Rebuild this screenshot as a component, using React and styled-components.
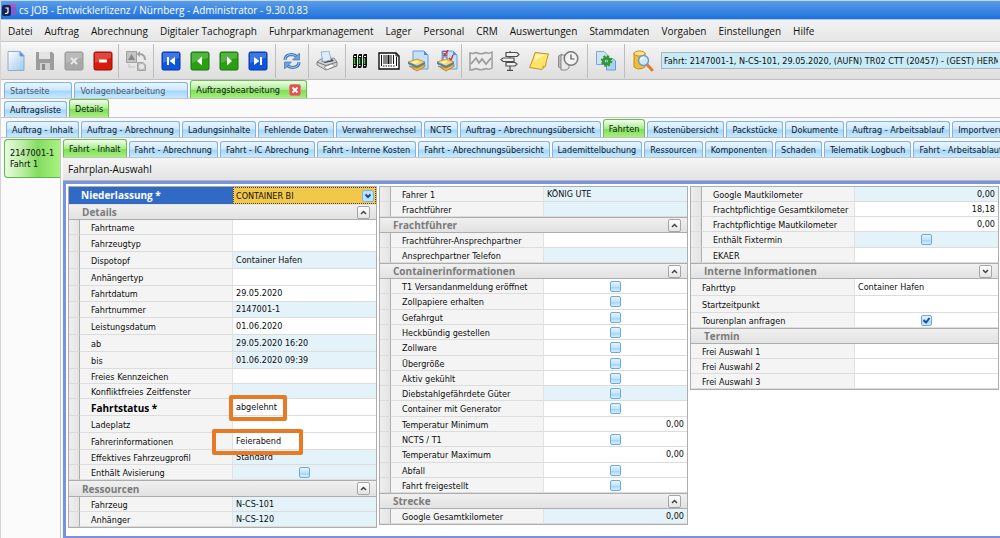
import styled, { createGlobalStyle, css } from "styled-components";

const GlobalStyle = createGlobalStyle`
  * {
    box-sizing: border-box;
  }

  body {
    margin: 0;
    background: #fafafa;
    color: #0c0c0c;
    font-family: "DejaVu Sans Condensed", "Noto Sans", sans-serif;
    font-size: 9px;
    line-height: 14px;
    overflow: hidden;
  }

  button,
  input,
  select {
    font: inherit;
    color: inherit;
    margin: 0;
  }
`;

const Window = styled.div`
  display: flex;
  flex-direction: column;
  min-height: 100vh;
  border-left: 1px solid #d4d4d4;
`;

const TitleBar = styled.header`
  display: flex;
  align-items: center;
  gap: 3px;
  height: 20px;
  padding-left: 1px;
  border-top: 1px solid #c3d9f5;
  border-bottom: 1px solid #a9c9f2;
  background: linear-gradient(#5a9dea, #1f70d8);
  color: #fff;
  font-family: "Open Sans", "Noto Sans", sans-serif;
  font-size: 10px;
`;

const MenuBar = styled.nav`
  display: flex;
  align-items: center;
  gap: 12px;
  height: 22px;
  padding-left: 7px;
  border-bottom: 1px solid #c6c6c6;
  background: linear-gradient(#f3f3f3, #e6e6e6);
`;

const MenuLink = styled.a`
  color: #111;
  font-family: "Open Sans", "Noto Sans", sans-serif;
  font-size: 10px;
  text-decoration: none;
  white-space: nowrap;
`;

const Toolbar = styled.div`
  display: flex;
  align-items: center;
  height: 38px;
  border-bottom: 1px solid #c0c0c0;
  background: linear-gradient(#fafafa, #f0f0f0 20%, #dedede);
`;

const ToolGroup = styled.div`
  display: flex;
  flex: none;
  align-items: center;
  gap: 1px;
  height: 34px;
  padding: 0 ${(p) => p.$space}px;
  border-right: ${(p) => (p.$last ? "none" : "1px solid #bdbdbd")};
`;

const ToolButton = styled.button`
  display: flex;
  align-items: center;
  justify-content: center;
  width: 28px;
  height: 28px;
  padding: 0;
  border: 0;
  background: none;
`;

const TripField = styled.input`
  flex: 1;
  min-width: 0;
  height: 17px;
  padding: 0 2px;
  border: 1px solid #a8b4bb;
  border-right: 0;
  background: #c9ebf7;
`;

const TabBar = styled.div`
  display: flex;
  align-items: flex-end;
  gap: 2px;
  height: ${(p) => p.$height}px;
  padding-left: ${(p) => p.$indent}px;
  border-bottom: 1px solid #c4c4c4;
  background: #fafafa;
  overflow: hidden;
`;

const activeTab = css`
  height: 18px;
  border-color: #67c04d;
  background: linear-gradient(#f4fff0, #a9ec8c 50%, #82de5a 55%, #a4f07c);
`;

const Tab = styled.button`
  display: flex;
  flex: none;
  align-items: center;
  gap: 9px;
  height: 16px;
  padding: 0 ${(p) => p.$end || 5}px 0 5px;
  border: 1px solid #7fb2e8;
  border-bottom: 0;
  border-radius: 3px 3px 0 0;
  background: linear-gradient(#e9f5ff, #cfe9ff 45%, #a6d6fd 55%, #c6eaff);
  color: ${(p) => (p.$muted ? "#4a5866" : "#0f1820")};
  white-space: nowrap;
  ${(p) => p.$active && activeTab}
`;

const Body = styled.div`
  display: flex;
  flex: 1;
  min-width: 0;
`;

const Sidebar = styled.aside`
  flex: none;
  width: 60px;
  padding: 1px 0 0 3px;
  border-right: 1px solid #c8c8c8;
  background: #fbfbfb;
`;

const SideTab = styled.button`
  width: 100%;
  height: 39px;
  padding: 0 0 0 5px;
  border: 1px solid #5cb947;
  border-right: 0;
  border-radius: 4px 0 0 4px;
  background: linear-gradient(90deg, #e8fbe0, #b5ec9c 35%, #84dc5f 60%, #a9f283);
  line-height: 11px;
  text-align: left;
`;

const Main = styled.main`
  display: flex;
  flex: 1;
  flex-direction: column;
  min-width: 0;
  padding-left: 2px;
`;

const SelectionBar = styled.div`
  height: 23px;
  padding: 4px 5px;
  border-bottom: 1px solid #b5b5b5;
  background: linear-gradient(#f6f6f6, #e3e3e3);
  font-family: "Open Sans", "Noto Sans", sans-serif;
  font-size: 10px;
`;

const Sheet = styled.form`
  display: grid;
  flex: 1;
  grid-template-columns: repeat(3, minmax(0, 1fr));
  align-items: start;
  gap: 2px;
  padding: 2px 1px 8px 2px;
  border: 3px solid #7793dc;
  border-right: 0;
  background: #fff;
`;

const Panel = styled.div`
  border: 1px solid #adadad;
  background: #fff;
`;

const SectionHead = styled.div`
  display: flex;
  align-items: center;
  justify-content: space-between;
  height: ${(p) => p.$height || 16}px;
  padding: 0 6px 0 13px;
  border-top: 1px solid ${(p) => (p.$first ? "transparent" : "#adadad")};
  border-bottom: 1px solid #adadad;
  background: linear-gradient(#f0f0f0, #e2e2e2);
  color: #7b7b7b;
  font-family: "Open Sans", "Noto Sans", sans-serif;
  font-size: 10px;
  font-weight: bold;
`;

const FoldButton = styled.button`
  display: flex;
  align-items: center;
  justify-content: center;
  width: 13px;
  height: 13px;
  padding: 0;
  border: 1px solid #a5a5a5;
  border-radius: 2px;
  background: linear-gradient(#fff, #e4e4e4);
`;

const FieldRow = styled.div`
  display: grid;
  grid-template-columns: ${(p) => (p.$flat ? "" : "11px")} ${(p) =>
      p.$flat ? "164fr" : "153fr"} 143fr;
  grid-template-rows: 100%;
  height: ${(p) => p.$height}px;
`;

const Gutter = styled.span`
  border-right: 1px solid #adadad;
  border-bottom: 1px solid #dcdcdc;
  background: linear-gradient(90deg, #eee, #e4e4e4);
`;

const requiredLabel = css`
  color: #000;
  font-family: "Open Sans", "Noto Sans", sans-serif;
  font-size: 10px;
  font-weight: bold;
`;

const FieldLabel = styled.label`
  display: flex;
  align-items: center;
  padding: 1px 0 0 11px;
  border-right: 1px solid #e2e2e2;
  border-bottom: 1px solid #dcdcdc;
  background: #f4f4f4;
  line-height: 12px;
  white-space: nowrap;
  ${(p) => p.$required && requiredLabel}
`;

const ValueCell = styled.div`
  position: relative;
  display: flex;
  align-items: center;
  justify-content: center;
  min-width: 0;
  border-bottom: 1px solid #dcdcdc;
  background: ${(p) => (p.$locked ? "#e4f3f9" : "#fff")};
  z-index: ${(p) => (p.$marked ? 1 : "auto")};
`;

const ValueInput = styled.input`
  width: 100%;
  height: 100%;
  padding: 0 3px 1px;
  border: 0;
  background: none;
  line-height: 12px;
  outline: none;
  text-align: ${(p) => (p.$numeric ? "right" : "left")};
`;

const CheckInput = styled.input`
  appearance: none;
  width: 11px;
  height: 11px;
  border: 1px solid #6fa8de;
  border-radius: 2px;
  background: linear-gradient(#e6f4ff, #c4e4fd 50%, #a4d6fc 60%, #d4f0ff);
`;

const CheckMark = styled.svg`
  position: absolute;
  pointer-events: none;
`;

const Highlight = styled.span`
  position: absolute;
  top: -4px;
  left: -${(p) => p.$before}px;
  width: ${(p) => p.$width}px;
  height: 26px;
  border: 4px solid #e87a25;
  border-radius: 2px;
  pointer-events: none;
`;

const BranchRow = styled.div`
  display: grid;
  grid-template-columns: 164fr 143fr;
  height: 17px;
  background: #316ac5;
`;

const BranchLabel = styled.label`
  padding-left: 12px;
  color: #fff;
  font-family: "Open Sans", "Noto Sans", sans-serif;
  font-size: 10px;
  font-weight: bold;
  line-height: 17px;
`;

const BranchCell = styled.div`
  position: relative;
  display: flex;
  align-items: center;
  border: 1px dotted #4d4220;
  background: #f2c84b;
`;

const BranchSelect = styled.select`
  appearance: none;
  width: 100%;
  height: 15px;
  padding: 0 2px;
  border: 0;
  background: none;
`;

const DropIcon = styled.svg`
  position: absolute;
  right: 1px;
  pointer-events: none;
`;

const menuItems = [
  "Datei",
  "Auftrag",
  "Abrechnung",
  "Digitaler Tachograph",
  "Fuhrparkmanagement",
  "Lager",
  "Personal",
  "CRM",
  "Auswertungen",
  "Stammdaten",
  "Vorgaben",
  "Einstellungen",
  "Hilfe",
];

const orderTabs = [
  "Auftrag - Inhalt",
  "Auftrag - Abrechnung",
  "Ladungsinhalte",
  "Fehlende Daten",
  "Verwahrerwechsel",
  "NCTS",
  "Auftrag - Abrechnungsübersicht",
  "Fahrten",
  "Kostenübersicht",
  "Packstücke",
  "Dokumente",
  "Auftrag - Arbeitsablauf",
  "Importverwaltung",
];

const tripTabs = [
  "Fahrt - Inhalt",
  "Fahrt - Abrechnung",
  "Fahrt - IC Abrechung",
  "Fahrt - Interne Kosten",
  "Fahrt - Abrechnungsübersicht",
  "Lademittelbuchung",
  "Ressourcen",
  "Komponenten",
  "Schaden",
  "Telematik Logbuch",
  "Fahrt - Arbeitsablauf",
];

const leftRows = [
  { section: "Details", first: true },
  { label: "Fahrtname" },
  { label: "Fahrzeugtyp", height: 17 },
  { label: "Dispotopf", value: "Container Hafen", locked: true, height: 17 },
  { label: "Anhängertyp", height: 17 },
  { label: "Fahrtdatum", value: "29.05.2020", height: 16 },
  { label: "Fahrtnummer", value: "2147001-1", locked: true, height: 16 },
  { label: "Leistungsdatum", value: "01.06.2020", height: 17 },
  { label: "ab", value: "29.05.2020 16:20", locked: true, height: 17 },
  { label: "bis", value: "01.06.2020 09:39", locked: true, height: 17 },
  { label: "Freies Kennzeichen" },
  { label: "Konfliktfreies Zeitfenster", locked: true },
  {
    label: "Fahrtstatus *",
    value: "abgelehnt",
    required: true,
    height: 17,
    mark: { before: 4, width: 58 },
  },
  { label: "Ladeplatz", height: 17 },
  {
    label: "Fahrerinformationen",
    value: "Feierabend",
    height: 17,
    mark: { before: 21, width: 91 },
  },
  { label: "Effektives Fahrzeugprofil", value: "Standard", locked: true },
  { label: "Enthält Avisierung", check: true, locked: true },
  { section: "Ressourcen", height: 17 },
  { label: "Fahrzeug", value: "N-CS-101", locked: true },
  { label: "Anhänger", value: "N-CS-120", locked: true },
];

const middleRows = [
  { label: "Fahrer 1", value: "KÖNIG UTE", locked: true },
  { label: "Frachtführer", locked: true },
  { section: "Frachtführer" },
  { label: "Frachtführer-Ansprechpartner" },
  { label: "Ansprechpartner Telefon", locked: true },
  { section: "Containerinformationen" },
  { label: "T1 Versandanmeldung eröffnet", check: true },
  { label: "Zollpapiere erhalten", check: true, height: 16 },
  { label: "Gefahrgut", check: true },
  { label: "Heckbündig gestellen", check: true },
  { label: "Zollware", check: true, height: 16 },
  { label: "Übergröße", check: true },
  { label: "Aktiv gekühlt", check: true },
  { label: "Diebstahlgefährdete Güter", check: true, locked: true },
  { label: "Container mit Generator", check: true, height: 16 },
  { label: "Temperatur Minimum", value: "0,00", numeric: true },
  { label: "NCTS / T1", check: true },
  { label: "Temperatur Maximum", value: "0,00", numeric: true, height: 16 },
  { label: "Abfall", check: true },
  { label: "Fahrt freigestellt", check: true },
  { section: "Strecke" },
  { label: "Google Gesamtkilometer", value: "0,00", numeric: true, locked: true },
];

const rightRows = [
  { label: "Google Mautkilometer", value: "0,00", numeric: true, locked: true },
  { label: "Frachtpflichtige Gesamtkilometer", value: "18,18", numeric: true },
  { label: "Frachtpflichtige Mautkilometer", value: "0,00", numeric: true },
  { label: "Enthält Fixtermin", check: true, locked: true, height: 16 },
  { label: "EKAER" },
  { section: "Interne Informationen", folded: true },
  { label: "Fahrttyp", value: "Container Hafen", flat: true, height: 17 },
  { label: "Startzeitpunkt", flat: true, height: 17 },
  { label: "Tourenplan anfragen", check: true, checked: true, flat: true },
  { section: "Termin", noFold: true },
  { label: "Frei Auswahl 1", flat: true },
  { label: "Frei Auswahl 2", flat: true },
  { label: "Frei Auswahl 3", flat: true },
];

const NewIcon = () => (
  <svg width="20" height="22" viewBox="0 0 20 22">
    <defs>
      <linearGradient id="page" x1="0" y1="0" x2="1" y2="1">
        <stop offset="0" stopColor="#fff" />
        <stop offset="1" stopColor="#9cc8ee" />
      </linearGradient>
    </defs>
    <path d="M2 1.500H14L18 5.500V20.500H2Z" fill="url(#page)" stroke="#8eabc9" />
    <path d="M14 1.500V6H18" fill="#4d94dd" stroke="#6d9fd2" />
  </svg>
);

const SaveIcon = () => (
  <svg width="20" height="20" viewBox="0 0 20 20">
    <path d="M1 1H17L19 3V19H1Z" fill="#9c9c9c" />
    <path d="M4 1H15V8H4Z" fill="#e3e3e3" />
    <path d="M5 12H15V19H5Z" fill="#cfcfcf" />
    <path d="M7 13H10V19H7Z" fill="#8a8a8a" />
  </svg>
);

const SquareIcon = ({ fill, edge, children }) => (
  <svg width="20" height="20" viewBox="0 0 20 20">
    <rect x="1" y="1" width="18" height="18" rx="1.500" fill={fill} stroke={edge} />
    <path d="M2 2H18V7Q10 8 2 12Z" fill="#fff" opacity=".2" />
    {children}
  </svg>
);

const ConvertIcon = () => (
  <svg width="22" height="22" viewBox="0 0 22 22">
    <rect x="1.500" y="1.500" width="10" height="11" fill="#c4c4c4" stroke="#a2a2a2" />
    <path d="M6.500 4L10 10H3Z" fill="#858585" />
    <path d="M12.500 12.500H18L20.500 15V20.500H12.500Z" fill="#bdbdbd" stroke="#a2a2a2" />
    <circle cx="16.500" cy="16.500" r="2.500" fill="#e9e9e9" />
    <path d="M20 10Q20 4 14 4" fill="none" stroke="#a2a2a2" strokeWidth="2" />
    <path d="M15 1V7L11.500 4Z" fill="#a2a2a2" />
    <path d="M4 14V17H10" fill="none" stroke="#ccc" strokeWidth="1.500" />
  </svg>
);

const RefreshIcon = () => (
  <svg width="18" height="18" viewBox="0 0 18 18" fill="none">
    <path d="M2 8Q2 3 8 2.500Q12 2.500 14 5" stroke="#3f78b8" strokeWidth="3" />
    <path d="M2 8Q2 3 8 2.500Q12 2.500 14 5" stroke="#a8cdf0" strokeWidth="1" />
    <path d="M16.500 1V8H9.500Z" fill="#6fa3d8" stroke="#3f78b8" strokeWidth=".7" />
    <path d="M16 10Q16 15 10 15.500Q6 15.500 4 13" stroke="#3f78b8" strokeWidth="3" />
    <path d="M16 10Q16 15 10 15.500Q6 15.500 4 13" stroke="#a8cdf0" strokeWidth="1" />
    <path d="M1.500 17V10H8.500Z" fill="#6fa3d8" stroke="#3f78b8" strokeWidth=".7" />
  </svg>
);

const PrintIcon = () => (
  <svg width="22" height="20" viewBox="0 0 22 20">
    <path d="M1 11L5 8L18 7L21 11V15L10 19L1 14Z" fill="#d5d5d5" stroke="#6c6c6c" strokeWidth=".8" />
    <path d="M1 11L10 14.500L21 11" fill="none" stroke="#777" />
    <path d="M5 10L16 8L18 10L9 12Z" fill="#444" />
    <path d="M5 1L13 0L15 9L7 11Z" fill="#dcecfb" stroke="#7ca6d2" strokeWidth=".8" />
    <path d="M8 16L16 13L19 15L11 18.500Z" fill="#fff" stroke="#777" strokeWidth=".6" />
  </svg>
);

const BindersIcon = () => (
  <svg width="16" height="16" viewBox="0 0 16 16">
    {[1, 6, 11].map((x) => (
      <g key={x}>
        <path d={`M${x} 3L${x + 1} 1H${x + 4}V13L${x + 3} 15H${x}Z`} fill="#111" />
        <path d={`M${x + 1} 3.500H${x + 3}`} stroke="#fff" />
        <path d={`M${x + 1.5} 5V11`} stroke="#38c938" strokeWidth="1.400" />
        <path d={`M${x + 1} 12.500H${x + 2.5}`} stroke="#fff" />
      </g>
    ))}
  </svg>
);

const BarcodeIcon = () => (
  <svg width="22" height="18" viewBox="0 0 22 18">
    <path d="M1 1H18L21 4V17H1Z" fill="#fff" stroke="#111" strokeWidth="1.400" />
    <path d="M18 1V4H21" fill="none" stroke="#111" />
    <path d="M3.500 3V14M6 3V12M8 3V12M13 3V12M15.500 3V12M18.500 5V14" stroke="#111" strokeWidth="1" />
    <path d="M10.500 3V12" stroke="#111" strokeWidth="2" />
    <path d="M5 14H17" stroke="#111" strokeDasharray="1.500 1" />
  </svg>
);

const ArchiveIcon = ({ checked }) => (
  <svg width="22" height="22" viewBox="0 0 22 22">
    <path d="M6 1H17L21 5V19H6Z" fill="#c5e0f8" stroke="#6b9ed2" />
    <path d="M17 1V5H21Z" fill="#4c8fdc" />
    {checked && (
      <g fill="#fff" stroke="#3b4a9a" strokeWidth=".8">
        <rect x="7" y="1.500" width="4" height="4" />
        <rect x="7" y="7" width="4" height="4" />
        <path d="M8 3L9 5L12 0M13 8L15 10L17 5" fill="none" stroke="#e02a1c" strokeWidth="1.400" />
      </g>
    )}
    <path d="M1 12L10 9L18 12L10 16Z" fill="#ffd566" stroke="#b37b18" strokeWidth=".7" />
    <path d="M1 12V14L10 18L18 14V12L10 16Z" fill="#3b82c8" />
    <path d="M2 16L10 18L18 14.500V16.500L10 21Z" fill="#f5b83a" stroke="#a87012" strokeWidth=".7" />
    <path d="M4 12L10 10.500L12 12L8 14Z" fill="#fff0b8" />
  </svg>
);

const MapIcon = () => (
  <svg width="24" height="20" viewBox="0 0 24 20" fill="none" stroke="#9d9d9d" strokeWidth="1.500">
    <path d="M1 2Q4 3 7 1.500Q12 4 17 1.500Q20 3 23 1V17Q20 19 17 17.500Q12 20 7 17.500Q4 19 1 19Z" fill="#ececec" />
    <path d="M2 13L7 7L10 12L13 8L17 13L22 7" strokeWidth="1.800" />
  </svg>
);

const SignIcon = () => (
  <svg width="20" height="20" viewBox="0 0 20 20" fill="#f0f0f0" stroke="#4d4d4d" strokeWidth="1.200">
    <path d="M10 0V19M7 19.300H13" />
    <path d="M6 1.500H17L19 3.500L17 5.500H6Z" />
    <path d="M14 7H3L1 8.500L3 10.500H14Z" />
    <path d="M6 11.500H15L17 13L15 15H6Z" />
  </svg>
);

const NoteIcon = () => (
  <svg width="22" height="20" viewBox="0 0 22 20">
    <path d="M7 1.500L20.500 3Q18 10 17.500 15L14 18.500L1.500 16.500Q5 9 7 1.500Z" fill="#ffe469" stroke="#b9952c" />
    <path d="M8 3L18 4Q10 6 6 12Z" fill="#fff5b8" />
    <path d="M14 18L14.500 14.500L17.500 15Z" fill="#d9ac2f" />
  </svg>
);

const HistoryIcon = () => (
  <svg width="22" height="20" viewBox="0 0 22 20">
    <path d="M1.500 5L5 3V18L1.500 16Z" fill="#bbb" stroke="#777" strokeWidth=".8" />
    <path d="M4 4H12V17L9 19H4Z" fill="#e9e9e9" stroke="#888" />
    <circle cx="14" cy="7.500" r="6.800" fill="#f3f3f3" stroke="#7d7d7d" strokeWidth="1.600" />
    <path d="M14 3.500V8H17.500" fill="none" stroke="#555" strokeWidth="1.200" />
  </svg>
);

const ProcessIcon = () => (
  <svg width="22" height="22" viewBox="0 0 22 22">
    <path d="M1.500 1.500H9L12 4.500V14.500H1.500Z" fill="#cfe4f8" stroke="#7ba7d4" />
    <path d="M11.500 8.500H18L20.500 11V20H11.500Z" fill="#a9cff2" stroke="#6b9bcb" />
    <circle cx="11.500" cy="11" r="3" fill="none" stroke="#2f9a2f" strokeWidth="3" />
    <circle cx="11.500" cy="11" r="4.800" fill="none" stroke="#2f9a2f" strokeWidth="2" strokeDasharray="2 1.770" />
  </svg>
);

const FindIcon = () => (
  <svg width="22" height="22" viewBox="0 0 22 22">
    <path d="M2 3V17Q7 21 13 17V3Z" fill="#f3bd32" stroke="#c48a12" />
    <ellipse cx="7.500" cy="3.500" rx="5.500" ry="2.500" fill="#ffe58a" stroke="#c48a12" />
    <path d="M15 14.500L20 20" stroke="#e07b28" strokeWidth="3" strokeLinecap="round" />
    <circle cx="11.500" cy="10.500" r="5" fill="#cfe7fa" stroke="#6d9cca" strokeWidth="1.500" />
    <path d="M8.500 10Q9 7.500 12 7.500" fill="none" stroke="#fff" strokeWidth="1.500" />
  </svg>
);

const AppLogo = () => (
  <svg width="14" height="14" viewBox="0 0 14 14">
    <rect x="4" y="1" width="10" height="10" rx="2" fill="#b55ab8" />
    <rect x="8" y="4" width="6" height="8" fill="#7f5fd0" />
    <rect y="2" width="9" height="11" rx="2" fill="#14255c" />
    <path d="M3.500 5H6V9Q6 10.500 3 10.500" fill="none" stroke="#fff" strokeWidth="1.200" />
  </svg>
);

const toolGroups = [
  {
    space: 1,
    tools: [
      { title: "Neu", icon: <NewIcon /> },
      { title: "Speichern", icon: <SaveIcon /> },
      {
        title: "Abbrechen",
        icon: (
          <SquareIcon fill="#a9a9a9" edge="#979797">
            <path d="M7 7L13 13M13 7L7 13" stroke="#e8e8e8" strokeWidth="2" />
          </SquareIcon>
        ),
      },
      {
        title: "Löschen",
        icon: (
          <SquareIcon fill="#d91a0c" edge="#8e1108">
            <path d="M6 10H14" stroke="#fff" strokeWidth="3" />
          </SquareIcon>
        ),
      },
    ],
  },
  { space: 3, tools: [{ title: "Umwandeln", icon: <ConvertIcon /> }] },
  {
    space: 3,
    tools: [
      {
        title: "Erster",
        icon: (
          <SquareIcon fill="#0d55dc" edge="#08379a">
            <path d="M6 6H8V14H6ZM14 6V14L8.500 10Z" fill="#fff" />
          </SquareIcon>
        ),
      },
      {
        title: "Voriger",
        icon: (
          <SquareIcon fill="#28a012" edge="#1b7010">
            <path d="M12 5.500V14.500L7 10Z" fill="#fff" />
          </SquareIcon>
        ),
      },
      {
        title: "Nächster",
        icon: (
          <SquareIcon fill="#28a012" edge="#1b7010">
            <path d="M8 5.500V14.500L13 10Z" fill="#fff" />
          </SquareIcon>
        ),
      },
      {
        title: "Letzter",
        icon: (
          <SquareIcon fill="#0d55dc" edge="#08379a">
            <path d="M12 6H14V14H12ZM6 6V14L11.500 10Z" fill="#fff" />
          </SquareIcon>
        ),
      },
    ],
  },
  { space: 2, tools: [{ title: "Aktualisieren", icon: <RefreshIcon /> }] },
  { space: 4, tools: [{ title: "Drucken", icon: <PrintIcon /> }] },
  {
    space: 0,
    tools: [
      { title: "Ordner", icon: <BindersIcon /> },
      { title: "Barcode", icon: <BarcodeIcon /> },
      { title: "Archiv", icon: <ArchiveIcon /> },
      { title: "Archivieren", icon: <ArchiveIcon checked /> },
    ],
  },
  {
    space: 5,
    tools: [
      { title: "Karte", icon: <MapIcon /> },
      { title: "Route", icon: <SignIcon /> },
      { title: "Notiz", icon: <NoteIcon /> },
      { title: "Historie", icon: <HistoryIcon /> },
    ],
  },
  { space: 4, tools: [{ title: "Vorgang", icon: <ProcessIcon /> }] },
  { space: 4, last: true, tools: [{ title: "Suchen", icon: <FindIcon /> }] },
];

const Fold = ({ folded, name }) => (
  <FoldButton type="button" aria-label={name}>
    <svg width="7" height="7" viewBox="0 0 7 7" fill="none" stroke="#444" strokeWidth="1.500">
      <path d={folded ? "M1 2L3.500 4.500L6 2" : "M1 5L3.500 2.500L6 5"} />
    </svg>
  </FoldButton>
);

const Field = ({ row, id }) => {
  const height = row.height || 15;

  return (
    <FieldRow $height={height} $flat={row.flat}>
      {!row.flat && <Gutter />}
      <FieldLabel htmlFor={id} $required={row.required}>
        {row.label}
      </FieldLabel>
      <ValueCell $locked={row.locked} $marked={row.mark}>
        {row.check ? (
          <CheckInput id={id} type="checkbox" defaultChecked={row.checked} />
        ) : (
          <ValueInput
            id={id}
            type="text"
            defaultValue={row.value}
            readOnly={row.locked}
            $numeric={row.numeric}
          />
        )}
        {row.checked && (
          <CheckMark width="9" height="9" viewBox="0 0 9 9" fill="none">
            <path d="M1.500 4L4 6.500L7.500 2" stroke="#174f9c" strokeWidth="2" />
          </CheckMark>
        )}
        {row.mark && (
          <Highlight $before={row.mark.before} $width={row.mark.width} />
        )}
      </ValueCell>
    </FieldRow>
  );
};

const Rows = ({ rows, prefix }) =>
  rows.map((row, i) =>
    row.section ? (
      <SectionHead key={row.section} $height={row.height} $first={row.first}>
        {row.section}
        {!row.noFold && <Fold folded={row.folded} name={row.section} />}
      </SectionHead>
    ) : (
      <Field key={row.label} row={row} id={`${prefix}-${i}`} />
    )
  );

const App = () => {
  return (
    <Window>
      <GlobalStyle />
      <TitleBar>
        <AppLogo />
        cs JOB - Entwicklerlizenz / Nürnberg - Administrator - 9.30.0.83
      </TitleBar>
      <MenuBar>
        {menuItems.map((item) => (
          <MenuLink key={item} href="#">
            {item}
          </MenuLink>
        ))}
      </MenuBar>
      <Toolbar>
        {toolGroups.map((group, i) => (
          <ToolGroup key={i} $space={group.space} $last={group.last}>
            {group.tools.map((tool) => (
              <ToolButton key={tool.title} type="button" aria-label={tool.title}>
                {tool.icon}
              </ToolButton>
            ))}
          </ToolGroup>
        ))}
        <TripField
          aria-label="Fahrt"
          defaultValue="Fahrt: 2147001-1, N-CS-101, 29.05.2020, (AUFN) TR02 CTT (20457) - (GEST) HERMES"
        />
      </Toolbar>

      <TabBar $height={19} $indent={3}>
        <Tab $muted $end={22}>
          Startseite
        </Tab>
        <Tab $muted $end={22}>
          Vorlagenbearbeitung
        </Tab>
        <Tab $active>
          Auftragsbearbeitung
          <svg width="12" height="12" viewBox="0 0 12 12">
            <rect x=".5" y=".5" width="11" height="11" rx="2" fill="#e8504a" stroke="#d9827c" />
            <path d="M3.500 3.500L8.500 8.500M8.500 3.500L3.500 8.500" stroke="#fff" strokeWidth="1.800" />
          </svg>
        </Tab>
      </TabBar>
      <TabBar $height={19} $indent={3}>
        <Tab>Auftragsliste</Tab>
        <Tab $active>Details</Tab>
      </TabBar>
      <TabBar $height={20} $indent={5}>
        {orderTabs.map((tab) => (
          <Tab key={tab} $active={tab === "Fahrten"}>
            {tab}
          </Tab>
        ))}
      </TabBar>

      <Body>
        <Sidebar>
          <SideTab>
            2147001-1
            <br />
            Fahrt 1
          </SideTab>
        </Sidebar>
        <Main>
          <TabBar $height={20} $indent={0}>
            {tripTabs.map((tab) => (
              <Tab key={tab} $active={tab === "Fahrt - Inhalt"}>
                {tab}
              </Tab>
            ))}
          </TabBar>
          <SelectionBar>Fahrplan-Auswahl</SelectionBar>
          <Sheet>
            <Panel>
              <BranchRow>
                <BranchLabel htmlFor="branch">Niederlassung *</BranchLabel>
                <BranchCell>
                  <BranchSelect id="branch">
                    <option>CONTAINER BI</option>
                  </BranchSelect>
                  <DropIcon width="12" height="12" viewBox="0 0 12 12">
                    <rect x=".5" y=".5" width="11" height="11" rx="1.500" fill="#bfe2fb" stroke="#7db3e6" />
                    <path d="M3.500 4.500L6 7L8.500 4.500" fill="none" stroke="#174f9c" strokeWidth="2" />
                  </DropIcon>
                </BranchCell>
              </BranchRow>
              <Rows rows={leftRows} prefix="left" />
            </Panel>
            <Panel>
              <Rows rows={middleRows} prefix="middle" />
            </Panel>
            <Panel>
              <Rows rows={rightRows} prefix="right" />
            </Panel>
          </Sheet>
        </Main>
      </Body>
    </Window>
  );
};

export default App;
